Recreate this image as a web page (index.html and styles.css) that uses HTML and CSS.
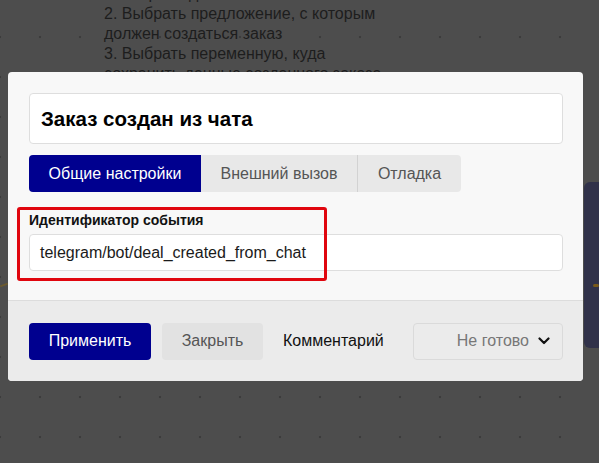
FILE: index.html
```html
<!DOCTYPE html>
<html lang="ru">
<head>
<meta charset="utf-8">
<link rel="stylesheet" href="styles.css">
</head>
<body>
<div class="canvas">
  <div class="node-text">
    <div>1. Открыть диалог с пользователем</div>
    <div>2. Выбрать предложение, с которым</div>
    <div>должен создаться заказ</div>
    <div>3. Выбрать переменную, куда</div>
    <div>сохранить данные созданного заказа</div>
  </div>
  <div class="node-right"></div>
  <div class="wire wire-left"></div>
  <div class="wire wire-right"></div>
</div>

<div class="modal">
  <div class="modal-body">
    <div class="title-box">Заказ создан из чата</div>
    <div class="tabs">
      <div class="tab tab-active">Общие настройки</div>
      <div class="tab">Внешний вызов</div>
      <div class="tab tab-last">Отладка</div>
    </div>
    <div class="field">
      <div class="field-label">Идентификатор события</div>
      <div class="field-input">telegram/bot/deal_created_from_chat</div>
    </div>
  </div>
  <div class="modal-footer">
    <div class="btn btn-primary">Применить</div>
    <div class="btn btn-secondary">Закрыть</div>
    <div class="comment">Комментарий</div>
    <div class="select">
      <span class="select-text">Не готово</span>
      <svg class="chevron" width="12" height="8" viewBox="0 0 12 8"><path d="M1.5 1.5 L6 6 L10.5 1.5" fill="none" stroke="#111" stroke-width="2.2" stroke-linecap="round" stroke-linejoin="round"/></svg>
    </div>
  </div>
  <div class="highlight"></div>
</div>
</body>
</html>
```

FILE: styles.css
```css
html, body {
  margin: 0;
  padding: 0;
}
body {
  width: 599px;
  height: 463px;
  overflow: hidden;
  position: relative;
  font-family: "Liberation Sans", Arial, sans-serif;
  background-color: #4d4d4d;
  background-image: radial-gradient(circle, #3c3c3c 1.1px, transparent 1.6px);
  background-size: 40px 40px;
  background-position: -20px 17px;
}
.canvas {
  position: absolute;
  inset: 0;
}
.node-text {
  position: absolute;
  left: 104px;
  top: -16px;
  font-size: 16px;
  line-height: 20px;
  color: #1d1d1d;
}
.node-right {
  position: absolute;
  left: 584px;
  top: 182px;
  width: 40px;
  height: 166px;
  border-radius: 6px;
  background: #31324a;
}
.wire {
  position: absolute;
  height: 2px;
  background: #6b5a2e;
}
.wire-left {
  left: 0;
  top: 284px;
  width: 8px;
  transform: rotate(-20deg);
}
.wire-right {
  left: 593px;
  top: 284px;
  width: 6px;
  height: 3px;
  border-radius: 2px;
  background: #7a5a1a;
}
.modal {
  position: absolute;
  left: 8px;
  top: 72px;
  width: 575px;
  height: 309px;
  border-radius: 4px;
  background: #f8f8f8;
  display: flex;
  flex-direction: column;
  overflow: hidden;
}
.modal-body {
  padding: 21px 20px 0 21px;
  height: 229px;
  box-sizing: border-box;
  border-bottom: 1px solid #dcdcdc;
}
.title-box {
  height: 51px;
  box-sizing: border-box;
  border: 1px solid #dedede;
  border-radius: 4px;
  background: #fff;
  padding-left: 11px;
  display: flex;
  align-items: center;
  font-size: 20.5px;
  font-weight: bold;
  color: #000;
}
.tabs {
  margin-top: 11px;
  display: flex;
  height: 37px;
}
.tab {
  display: flex;
  align-items: center;
  justify-content: center;
  background: #e8e8e8;
  color: #555;
  font-size: 16px;
  box-sizing: border-box;
}
.tab-active {
  width: 172px;
  background: #00008f;
  color: #fff;
  border-radius: 4px 0 0 4px;
}
.tab:nth-child(2) {
  width: 157px;
  border-right: 1px solid #d2d2d2;
}
.tab-last {
  width: 103px;
  border-radius: 0 4px 4px 0;
}
.field {
  margin-top: 20px;
}
.field-label {
  font-size: 14px;
  font-weight: bold;
  color: #111;
  line-height: 16px;
  margin-bottom: 6px;
}
.field-input {
  height: 37px;
  box-sizing: border-box;
  border: 1px solid #dedede;
  border-radius: 4px;
  background: #fff;
  padding-left: 10px;
  display: flex;
  align-items: center;
  font-size: 16px;
  color: #1a1a1a;
}
.modal-footer {
  flex: 1;
  background: #ebebeb;
  display: flex;
  align-items: center;
  padding: 0 20px 0 21px;
}
.btn {
  height: 37px;
  border-radius: 4px;
  display: flex;
  align-items: center;
  justify-content: center;
  font-size: 16px;
  box-sizing: border-box;
}
.btn-primary {
  width: 122px;
  background: #00008f;
  color: #fff;
}
.btn-secondary {
  width: 101px;
  margin-left: 11px;
  background: #e2e2e2;
  color: #555;
}
.comment {
  margin-left: 20px;
  font-size: 16px;
  color: #111;
}
.select {
  margin-left: auto;
  width: 150px;
  height: 37px;
  box-sizing: border-box;
  border: 1px solid #dadada;
  border-radius: 4px;
  display: flex;
  align-items: center;
  justify-content: flex-end;
  padding-right: 12px;
  gap: 9px;
}
.select-text {
  font-size: 16px;
  color: #777;
}
.chevron {
  display: block;
}
.highlight {
  position: absolute;
  left: 9px;
  top: 135px;
  width: 310px;
  height: 74px;
  box-sizing: border-box;
  border: 3px solid #e0060e;
  border-radius: 3px;
}
```
